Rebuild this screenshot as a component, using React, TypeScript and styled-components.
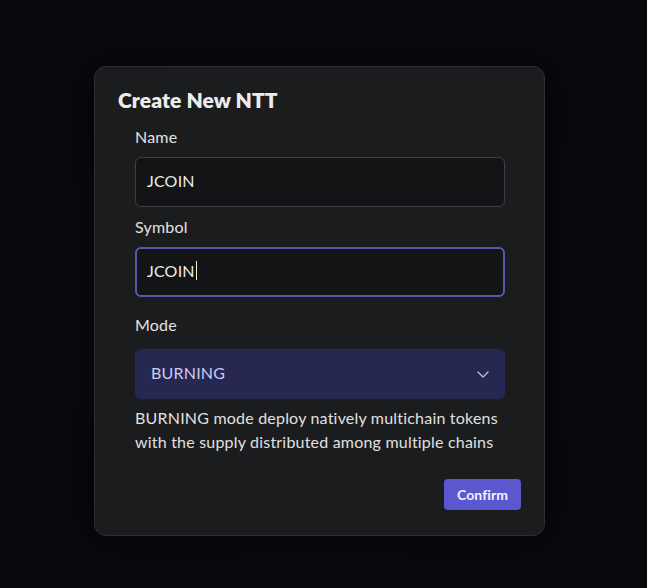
import React, { useState } from "react";
import styled, { createGlobalStyle } from "styled-components";

const Global = createGlobalStyle`
  html, body { margin: 0; padding: 0; }
  body {
    background: #07090d;
    font-family: Lato, "Noto Sans", sans-serif;
    color: #e6e6e6;
    letter-spacing: 0.2px;
  }
`;

const Page = styled.div`
  width: 647px;
  height: 588px;
  display: flex;
  justify-content: flex-start;
  align-items: flex-start;
  padding: 66px 0 0 94px;
  box-sizing: border-box;
  background: radial-gradient(ellipse at 50% 50%, #0b0d12 0%, #07090d 70%);
`;

const Card = styled.div`
  width: 451px;
  box-sizing: border-box;
  background: #1b1c1e;
  border: 1px solid #2e2f33;
  border-radius: 12px;
  padding: 19px 23px 25px;
  box-shadow: 0 0 40px rgba(0, 0, 0, 0.6);
  display: flex;
  flex-direction: column;
`;

const Title = styled.h2`
  margin: 0 0 11px;
  font-size: 21px;
  line-height: 28px;
  font-weight: 800;
  color: #ececec;
  letter-spacing: 0.1px;
`;

const Form = styled.div`
  padding: 0 16px 0 17px;
  display: flex;
  flex-direction: column;
`;

const Label = styled.label<{ $gap?: number; $after?: number }>`
  font-size: 16px;
  line-height: 24px;
  color: #e2e2e2;
  margin-top: ${(p) => p.$gap ?? 0}px;
  margin-bottom: ${(p) => p.$after ?? 8}px;
`;

const Input = styled.input`
  height: 50px;
  box-sizing: border-box;
  border: 1px solid #3f4044;
  border-radius: 6px;
  background: #131416;
  color: #ececec;
  font-family: inherit;
  letter-spacing: inherit;
  font-size: 16px;
  padding: 0 11px 3px;
  outline: none;
`;

const FocusField = styled.div`
  height: 50px;
  box-sizing: border-box;
  border: 2px solid #5a58aa;
  border-radius: 6px;
  background: #131416;
  color: #ececec;
  font-size: 16px;
  padding: 0 10px 3px;
  display: flex;
  align-items: center;
`;

const Caret = styled.span`
  display: inline-block;
  width: 1px;
  height: 19px;
  background: #ececec;
  margin-left: 1px;
`;

const Select = styled.div`
  height: 50px;
  box-sizing: border-box;
  border-radius: 6px;
  background: #262852;
  color: #c9cbf2;
  font-size: 16px;
  padding: 0 16px;
  display: flex;
  align-items: center;
  justify-content: space-between;
`;

const SelectValue = styled.span`
  padding-bottom: 3px;
`;

const Description = styled.p`
  margin: 7px 0 0;
  font-size: 16px;
  line-height: 24px;
  color: #e0e0e0;
`;

const Actions = styled.div`
  display: flex;
  justify-content: flex-end;
  margin-top: 25px;
`;

const Button = styled.button`
  width: 77px;
  height: 31px;
  border: none;
  border-radius: 4px;
  background: #5b58cf;
  color: #f2f2ff;
  font-family: inherit;
  font-size: 14px;
  font-weight: 700;
  letter-spacing: 0.1px;
  padding: 0 0 1px;
  cursor: pointer;
`;

export default function App() {
  const [name, setName] = useState("JCOIN");
  return (
    <>
      <Global />
      <Page>
        <Card>
          <Title>Create New NTT</Title>
          <Form>
            <Label>Name</Label>
            <Input value={name} onChange={(e) => setName(e.target.value)} />
            <Label $gap={8}>Symbol</Label>
            <FocusField>
              JCOIN
              <Caret />
            </FocusField>
            <Label $gap={16} $after={12}>Mode</Label>
            <Select>
              <SelectValue>BURNING</SelectValue>
              <svg width="12" height="7" viewBox="0 0 12 7" fill="none">
                <path d="M1 1l5 5 5-5" stroke="#b8bbe6" strokeWidth="1.4" strokeLinecap="round" strokeLinejoin="round" />
              </svg>
            </Select>
            <Description>
              BURNING mode deploy natively multichain tokens with the supply distributed among multiple chains
            </Description>
          </Form>
          <Actions>
            <Button>Confirm</Button>
          </Actions>
        </Card>
      </Page>
    </>
  );
}
